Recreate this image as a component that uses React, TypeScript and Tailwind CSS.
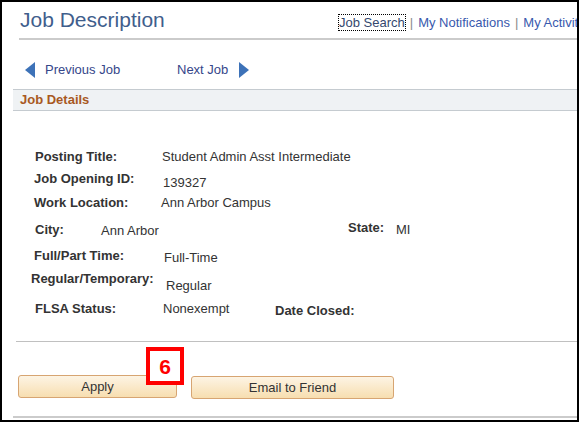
import React from "react";

const font = { fontFamily: '"Liberation Sans", Arial, sans-serif' };

const ArrowLeft = () => (
  <svg width="10" height="16" viewBox="0 0 10 16" className="shrink-0">
    <polygon points="10,0 10,16 0,8" fill="#3d72b8" />
  </svg>
);

const ArrowRight = () => (
  <svg width="10" height="16" viewBox="0 0 10 16" className="shrink-0">
    <polygon points="0,0 0,16 10,8" fill="#3d72b8" />
  </svg>
);

const Label = ({ className, children }: { className: string; children: React.ReactNode }) => (
  <span className={`shrink-0 text-[13px] leading-[16px] font-bold text-[#333] ${className}`}>{children}</span>
);

const Value = ({ className = "", children }: { className?: string; children: React.ReactNode }) => (
  <span className={`shrink-0 text-[13px] leading-[16px] text-[#333] ${className}`}>{children}</span>
);

export default function App() {
  return (
    <div style={font} className="relative w-[579px] h-[422px] overflow-hidden border-2 border-black bg-white">
      {/* header */}
      <div className="ml-[17px] flex items-baseline border-b-2 border-[#cbcbcb] pt-[6px] pb-[6px] whitespace-nowrap">
        <div className="w-[320px] shrink-0 pl-[1px] text-[21px] leading-[24px] text-[#3f5e8c]">Job Description</div>
        <div className="flex items-baseline text-[13px] leading-[15px]">
          <span className="text-[#34476e] outline-1 outline-dotted outline-black">Job Search</span>
          <span className="mx-[5px] text-[#8a8a8a]">|</span>
          <span className="text-[#3859ad]">My Notifications</span>
          <span className="mx-[5px] text-[#8a8a8a]">|</span>
          <span className="text-[#3859ad]">My Activity</span>
        </div>
      </div>

      {/* prev / next */}
      <div className="ml-[23px] mt-[22px] flex h-[16px] items-center text-[13px] leading-[16px] text-[#35468a]">
        <ArrowLeft />
        <span className="ml-[10px] w-[132px]">Previous Job</span>
        <span>Next Job</span>
        <span className="ml-[11px]">
          <ArrowRight />
        </span>
      </div>

      {/* section bar */}
      <div className="ml-[11px] mt-[11px] h-[22px] border-y border-[#c5cbd0] bg-[#eff2f4] pl-[7px] text-[13px] font-bold leading-[20px] text-[#a8591f]">
        Job Details
      </div>

      {/* fields */}
      <div className="flex flex-col">
        <div className="mt-[38px] flex">
          <Label className="ml-[33px] w-[127px]">Posting Title:</Label>
          <Value>Student Admin Asst Intermediate</Value>
        </div>
        <div className="mt-[6px] flex h-[20px] items-start">
          <Label className="ml-[32px] w-[129px]">Job Opening ID:</Label>
          <Value className="mt-[4px]">139327</Value>
        </div>
        <div className="mt-[4px] flex">
          <Label className="ml-[32px] w-[127px]">Work Location:</Label>
          <Value>Ann Arbor Campus</Value>
        </div>
        <div className="mt-[11px] flex items-start">
          <Label className="ml-[33px] w-[66px]">City:</Label>
          <Value className="mt-[1px] w-[247px]">Ann Arbor</Value>
          <Label className="-mt-[2px] w-[48px]">State:</Label>
          <Value>MI</Value>
        </div>
        <div className="mt-[9px] flex items-start">
          <Label className="ml-[32px] w-[130px]">Full/Part Time:</Label>
          <Value className="mt-[2px]">Full-Time</Value>
        </div>
        <div className="mt-[5px] flex items-start">
          <Label className="ml-[29px] w-[135px]">Regular/Temporary:</Label>
          <Value className="mt-[7px]">Regular</Value>
        </div>
        <div className="mt-[7px] flex items-start">
          <Label className="ml-[33px] w-[128px]">FLSA Status:</Label>
          <Value className="w-[112px]">Nonexempt</Value>
          <Label className="mt-[2px]">Date Closed:</Label>
        </div>
      </div>

      <div className="ml-[14px] mt-[22px] h-px bg-[#c0c0c0]" />

      {/* buttons */}
      <div className="mt-[33px] flex items-start">
        <button className="ml-[16px] h-[23px] w-[159px] rounded-[3px] border border-[#d7a572] bg-gradient-to-b from-[#fdf4e4] to-[#f7deb0] text-[13px] leading-[20px] text-[#333]">
          Apply
        </button>
        <button className="ml-[14px] mt-[1px] h-[23px] w-[203px] rounded-[3px] border border-[#d7a572] bg-gradient-to-b from-[#fdf4e4] to-[#f7deb0] text-[13px] leading-[20px] text-[#333]">
          Email to Friend
        </button>
      </div>

      <div className="ml-[11px] mt-[17px] h-[2px] bg-[#cbcbcb]" />

      {/* callout */}
      <div className="absolute left-[144px] top-[345px] flex h-[38px] w-[38px] items-center justify-center border-4 border-[#ff0000] bg-white text-[21px] font-bold leading-none text-[#ff0000]">
        6
      </div>
    </div>
  );
}
